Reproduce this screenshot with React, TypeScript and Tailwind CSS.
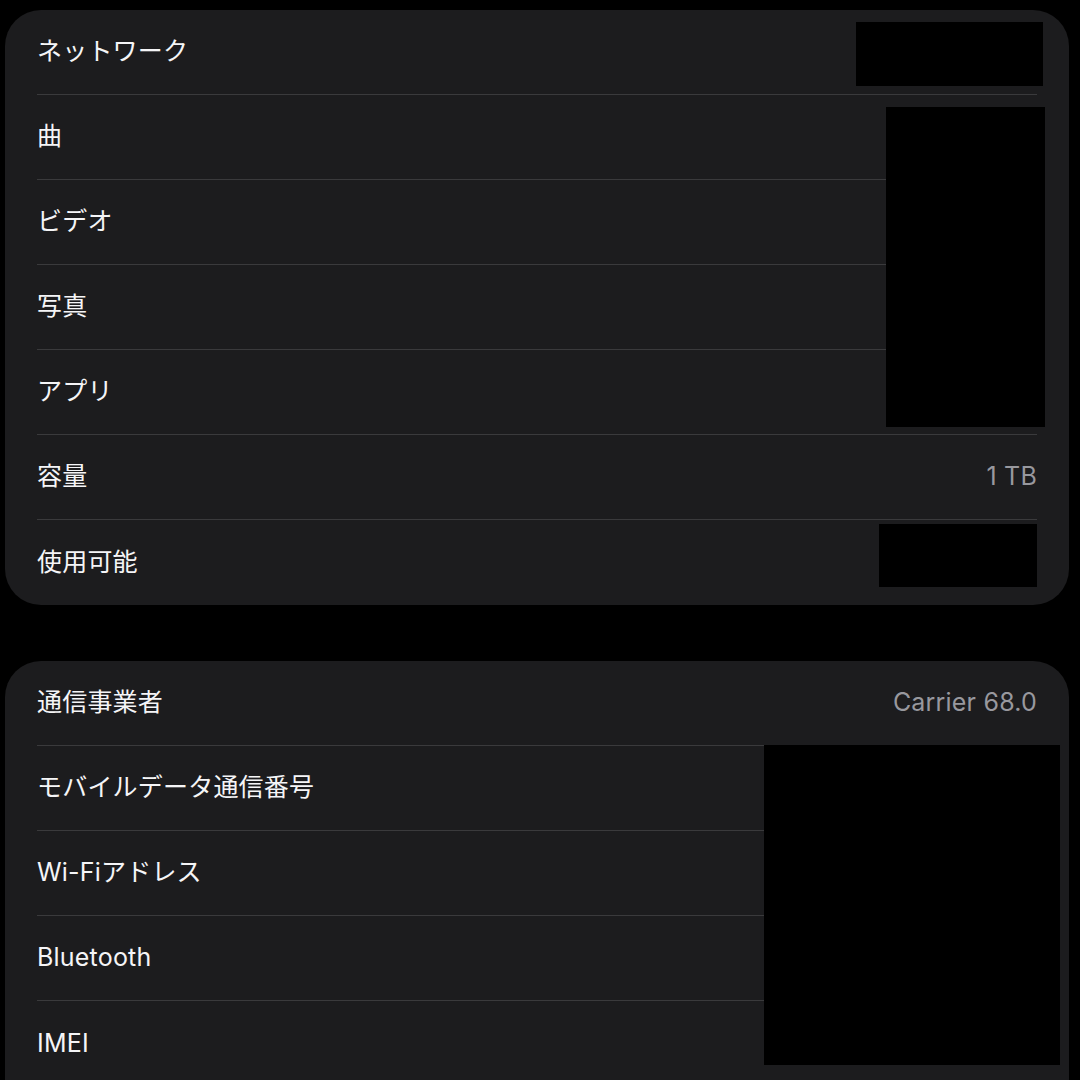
type Row = {
  label: string;
  value?: string;
};

const storageRows: Row[] = [
  { label: "ネットワーク" },
  { label: "曲" },
  { label: "ビデオ" },
  { label: "写真" },
  { label: "アプリ" },
  { label: "容量", value: "1 TB" },
  { label: "使用可能" },
];

const networkRows: Row[] = [
  { label: "通信事業者", value: "Carrier 68.0" },
  { label: "モバイルデータ通信番号" },
  { label: "Wi-Fiアドレス" },
  { label: "Bluetooth" },
  { label: "IMEI" },
];

function InfoRow({ row, last }: { row: Row; last: boolean }) {
  return (
    <div
      className={`mx-[32px] flex h-[85px] items-center justify-between ${
        last ? "" : "border-b border-[#3a3a3c]"
      }`}
    >
      <span className="text-[25px] tracking-[0.2px] text-[#f5f5f7]">{row.label}</span>
      {row.value && (
        <span className="text-[25px] tracking-[0.2px] text-[#98989e]">{row.value}</span>
      )}
    </div>
  );
}

export default function App() {
  return (
    <div
      className="flex h-[1080px] w-[1080px] flex-col gap-[56px] overflow-hidden bg-black pl-[5px] pt-[10px]"
      style={{ fontFamily: "Inter, 'Noto Sans CJK JP', sans-serif" }}
    >
      {/* storage card */}
      <div className="relative w-[1064px] shrink-0 rounded-[36px] bg-[#1c1c1e]">
        {storageRows.map((row, i) => (
          <InfoRow key={row.label} row={row} last={i === storageRows.length - 1} />
        ))}
        {/* redactions */}
        <div className="absolute left-[851px] top-[12px] h-[64px] w-[187px] bg-black" />
        <div className="absolute left-[881px] top-[97px] h-[320px] w-[159px] bg-black" />
        <div className="absolute left-[874px] top-[514px] h-[63px] w-[158px] bg-black" />
      </div>

      {/* network card */}
      <div className="relative w-[1064px] shrink-0 rounded-t-[36px] bg-[#1c1c1e] pb-[20px]">
        {networkRows.map((row, i) => (
          <InfoRow key={row.label} row={row} last={i === networkRows.length - 1} />
        ))}
        <div className="absolute left-[759px] top-[84px] h-[320px] w-[296px] bg-black" />
      </div>
    </div>
  );
}
